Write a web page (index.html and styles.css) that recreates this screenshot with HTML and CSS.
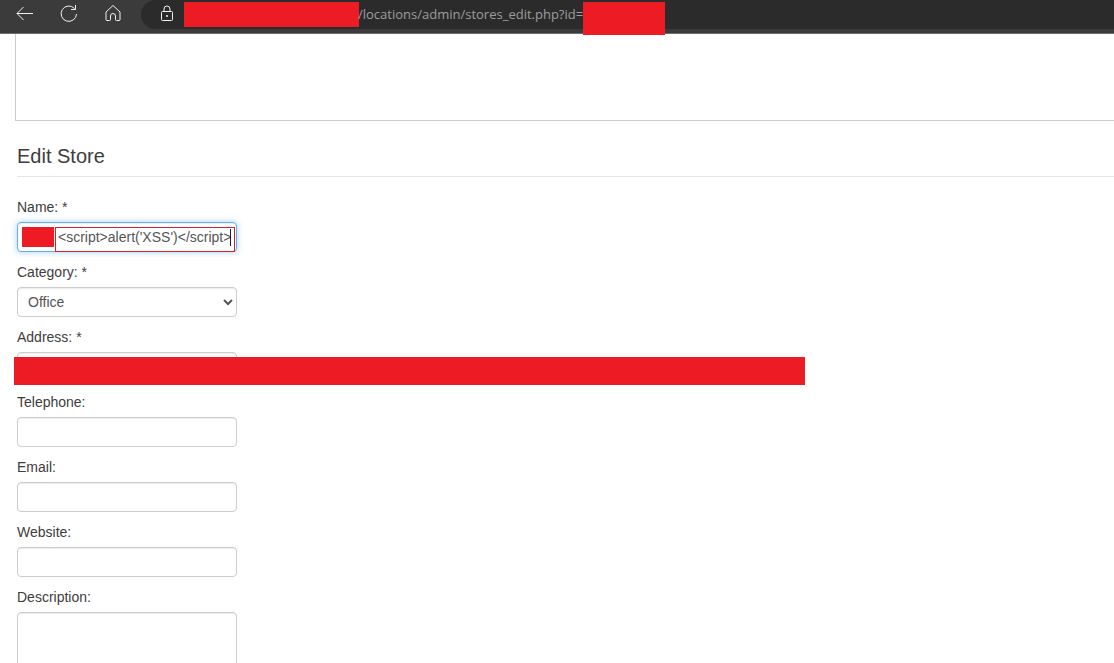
FILE: index.html
```html
<!DOCTYPE html>
<html lang="en">
<head>
    <meta charset="UTF-8">
    <meta name="viewport" content="width=device-width, initial-scale=1.0">
    <title>Edit Store</title>

    <link rel="stylesheet" href="styles.css">
</head>
<body>
    <!-- Browser toolbar -->
    <div class="toolbar">
        <div class="nav-buttons">
            <svg class="icon" width="20" height="20" viewBox="0 0 20 20"><path d="M18 10.500H2M8.500 4 2 10.500 8.500 17"/></svg>
            <svg class="icon" width="20" height="20" viewBox="0 0 20 20"><path d="M15.500 5.500A7.700 7.700 0 1 0 17.500 11M16.500 2v4.500h-4.500"/></svg>
            <svg class="icon" width="20" height="20" viewBox="0 0 20 20"><path d="M10 2.500 3 9v7.500a1 1 0 0 0 1 1h2.500a1 1 0 0 0 1-1V13a2.500 2.500 0 0 1 5 0v3.500a1 1 0 0 0 1 1H16a1 1 0 0 0 1-1V9z"/></svg>
        </div>
        <div class="address-bar">
            <svg class="icon lock" width="16" height="18" viewBox="0 0 16 18"><path d="M5 7V4a3 3 0 0 1 6 0v3M3.500 6.500h9a1 1 0 0 1 1 1v7a1 1 0 0 1-1 1h-9a1 1 0 0 1-1-1v-7a1 1 0 0 1 1-1z"/><circle class="lock-dot" cx="8" cy="11" r="1"/></svg>
            <span class="redact redact-host"></span>
            <span class="url">/locations/admin/stores_edit.php?id=</span>
            <span class="redact redact-id"></span>
        </div>
    </div>

    <div class="page">
        <div class="map-box"></div>

        <h2 class="title">Edit Store</h2>

        <form class="store-form">
            <div class="form-item">
                <label for="name">Name: *</label>
                <div class="name-wrap">
                    <input type="text" id="name" class="field field-name" value="<script>alert('XSS')</script>">
                    <span class="redact redact-name"></span>
                    <span class="name-outline"></span>
                    <span class="caret"></span>
                </div>
            </div>
            <div class="form-item">
                <label for="category">Category: *</label>
                <select id="category" class="field field-select">
                    <option>Office</option>
                </select>
            </div>
            <div class="form-item">
                <label for="address">Address: *</label>
                <input type="text" id="address" class="field">
            </div>
            <div class="form-item">
                <label for="telephone">Telephone:</label>
                <input type="text" id="telephone" class="field">
            </div>
            <div class="form-item">
                <label for="email">Email:</label>
                <input type="text" id="email" class="field">
            </div>
            <div class="form-item">
                <label for="website">Website:</label>
                <input type="text" id="website" class="field">
            </div>
            <div class="form-item">
                <label for="description">Description:</label>
                <textarea id="description" class="field field-text"></textarea>
            </div>
        </form>

        <span class="redact redact-address"></span>
    </div>
</body>
</html>
```

FILE: styles.css
```css
html, body {
    height: 100%;
}

body {
    margin: 0;
    overflow: hidden;
    background-color: #fff;
    color: #3d3d3d;
    font-family: "Liberation Sans", Arial, sans-serif;
    font-size: 14px;
}

/* Toolbar */
.toolbar {
    position: relative;
    z-index: 1;
    display: flex;
    height: 33px;
    background-color: #3b3b3b;
    border-bottom: 1px solid #6e6e6e;
}

.nav-buttons {
    display: flex;
    align-items: flex-start;
    gap: 24px;
    width: 141px;
    padding: 3px 0 0 15px;
    box-sizing: border-box;
}

.icon {
    flex: none;
    fill: none;
    stroke: #f2f2f2;
    stroke-width: 1;
}

.address-bar {
    flex: 1;
    display: flex;
    align-items: flex-start;
    height: 29px;
    padding-left: 18px;
    background-color: #2b2b2b;
    border-radius: 15px 0 0 15px;
}

.lock {
    margin-top: 5px;
    margin-right: 9px;
}

.lock-dot {
    fill: #f2f2f2;
    stroke: none;
}

.url {
    margin-left: -1px;
    color: #9d9d9d;
    font-family: "Open Sans", sans-serif;
    font-size: 13px;
    line-height: 28px;
    white-space: nowrap;
}

/* Redactions */
.redact {
    display: block;
    flex: none;
    background-color: #ed1c24;
}

.redact-host {
    width: 175px;
    height: 25px;
    margin-top: 2px;
}

.redact-id {
    width: 82px;
    height: 33px;
    margin-top: 2px;
}

.redact-name {
    position: absolute;
    left: 5px;
    top: 5px;
    width: 32px;
    height: 20px;
}

.redact-address {
    position: absolute;
    left: 14px;
    top: 323px;
    width: 791px;
    height: 28px;
}

.page {
    position: relative;
}

/* Box above the form */
.map-box {
    height: 86px;
    margin-left: 15px;
    border-left: 1px solid #ccc;
    border-bottom: 1px solid #ccc;
}

.title {
    margin: 22px 0 0 17px;
    padding-bottom: 7px;
    border-bottom: 1px solid #e5e5e5;
    font-size: 20px;
    font-weight: 400;
    line-height: 26px;
}

.store-form {
    padding: 20px 0 0 17px;
}

.form-item {
    height: 65px;
}

.form-item label {
    display: block;
    height: 20px;
    margin-bottom: 5px;
    line-height: 20px;
}

.field {
    display: block;
    width: 220px;
    height: 30px;
    padding: 4px 10px;
    box-sizing: border-box;
    border: 1px solid #ccc;
    border-radius: 4px;
    background-color: #fff;
    color: #555;
    font-family: inherit;
    font-size: 14px;
    box-shadow: inset 0 1px 1px rgba(0, 0, 0, 0.075);
}

.field-select {
    padding-left: 6px;
}

.field-text {
    height: 90px;
    resize: none;
}

/* Name field in focus, with the highlighted value */
.name-wrap {
    position: relative;
    width: 220px;
}

.field-name {
    padding-left: 40px;
    padding-right: 0;
    border-color: #66afe9;
    box-shadow: inset 0 1px 1px rgba(0, 0, 0, 0.075), 0 0 6px rgba(102, 175, 233, 0.6);
}

.name-outline {
    position: absolute;
    left: 38px;
    top: 5px;
    width: 180px;
    height: 25px;
    border: 1px solid #d2232a;
    box-sizing: border-box;
}

.caret {
    position: absolute;
    left: 213px;
    top: 7px;
    width: 1px;
    height: 17px;
    background-color: #222;
}
```
